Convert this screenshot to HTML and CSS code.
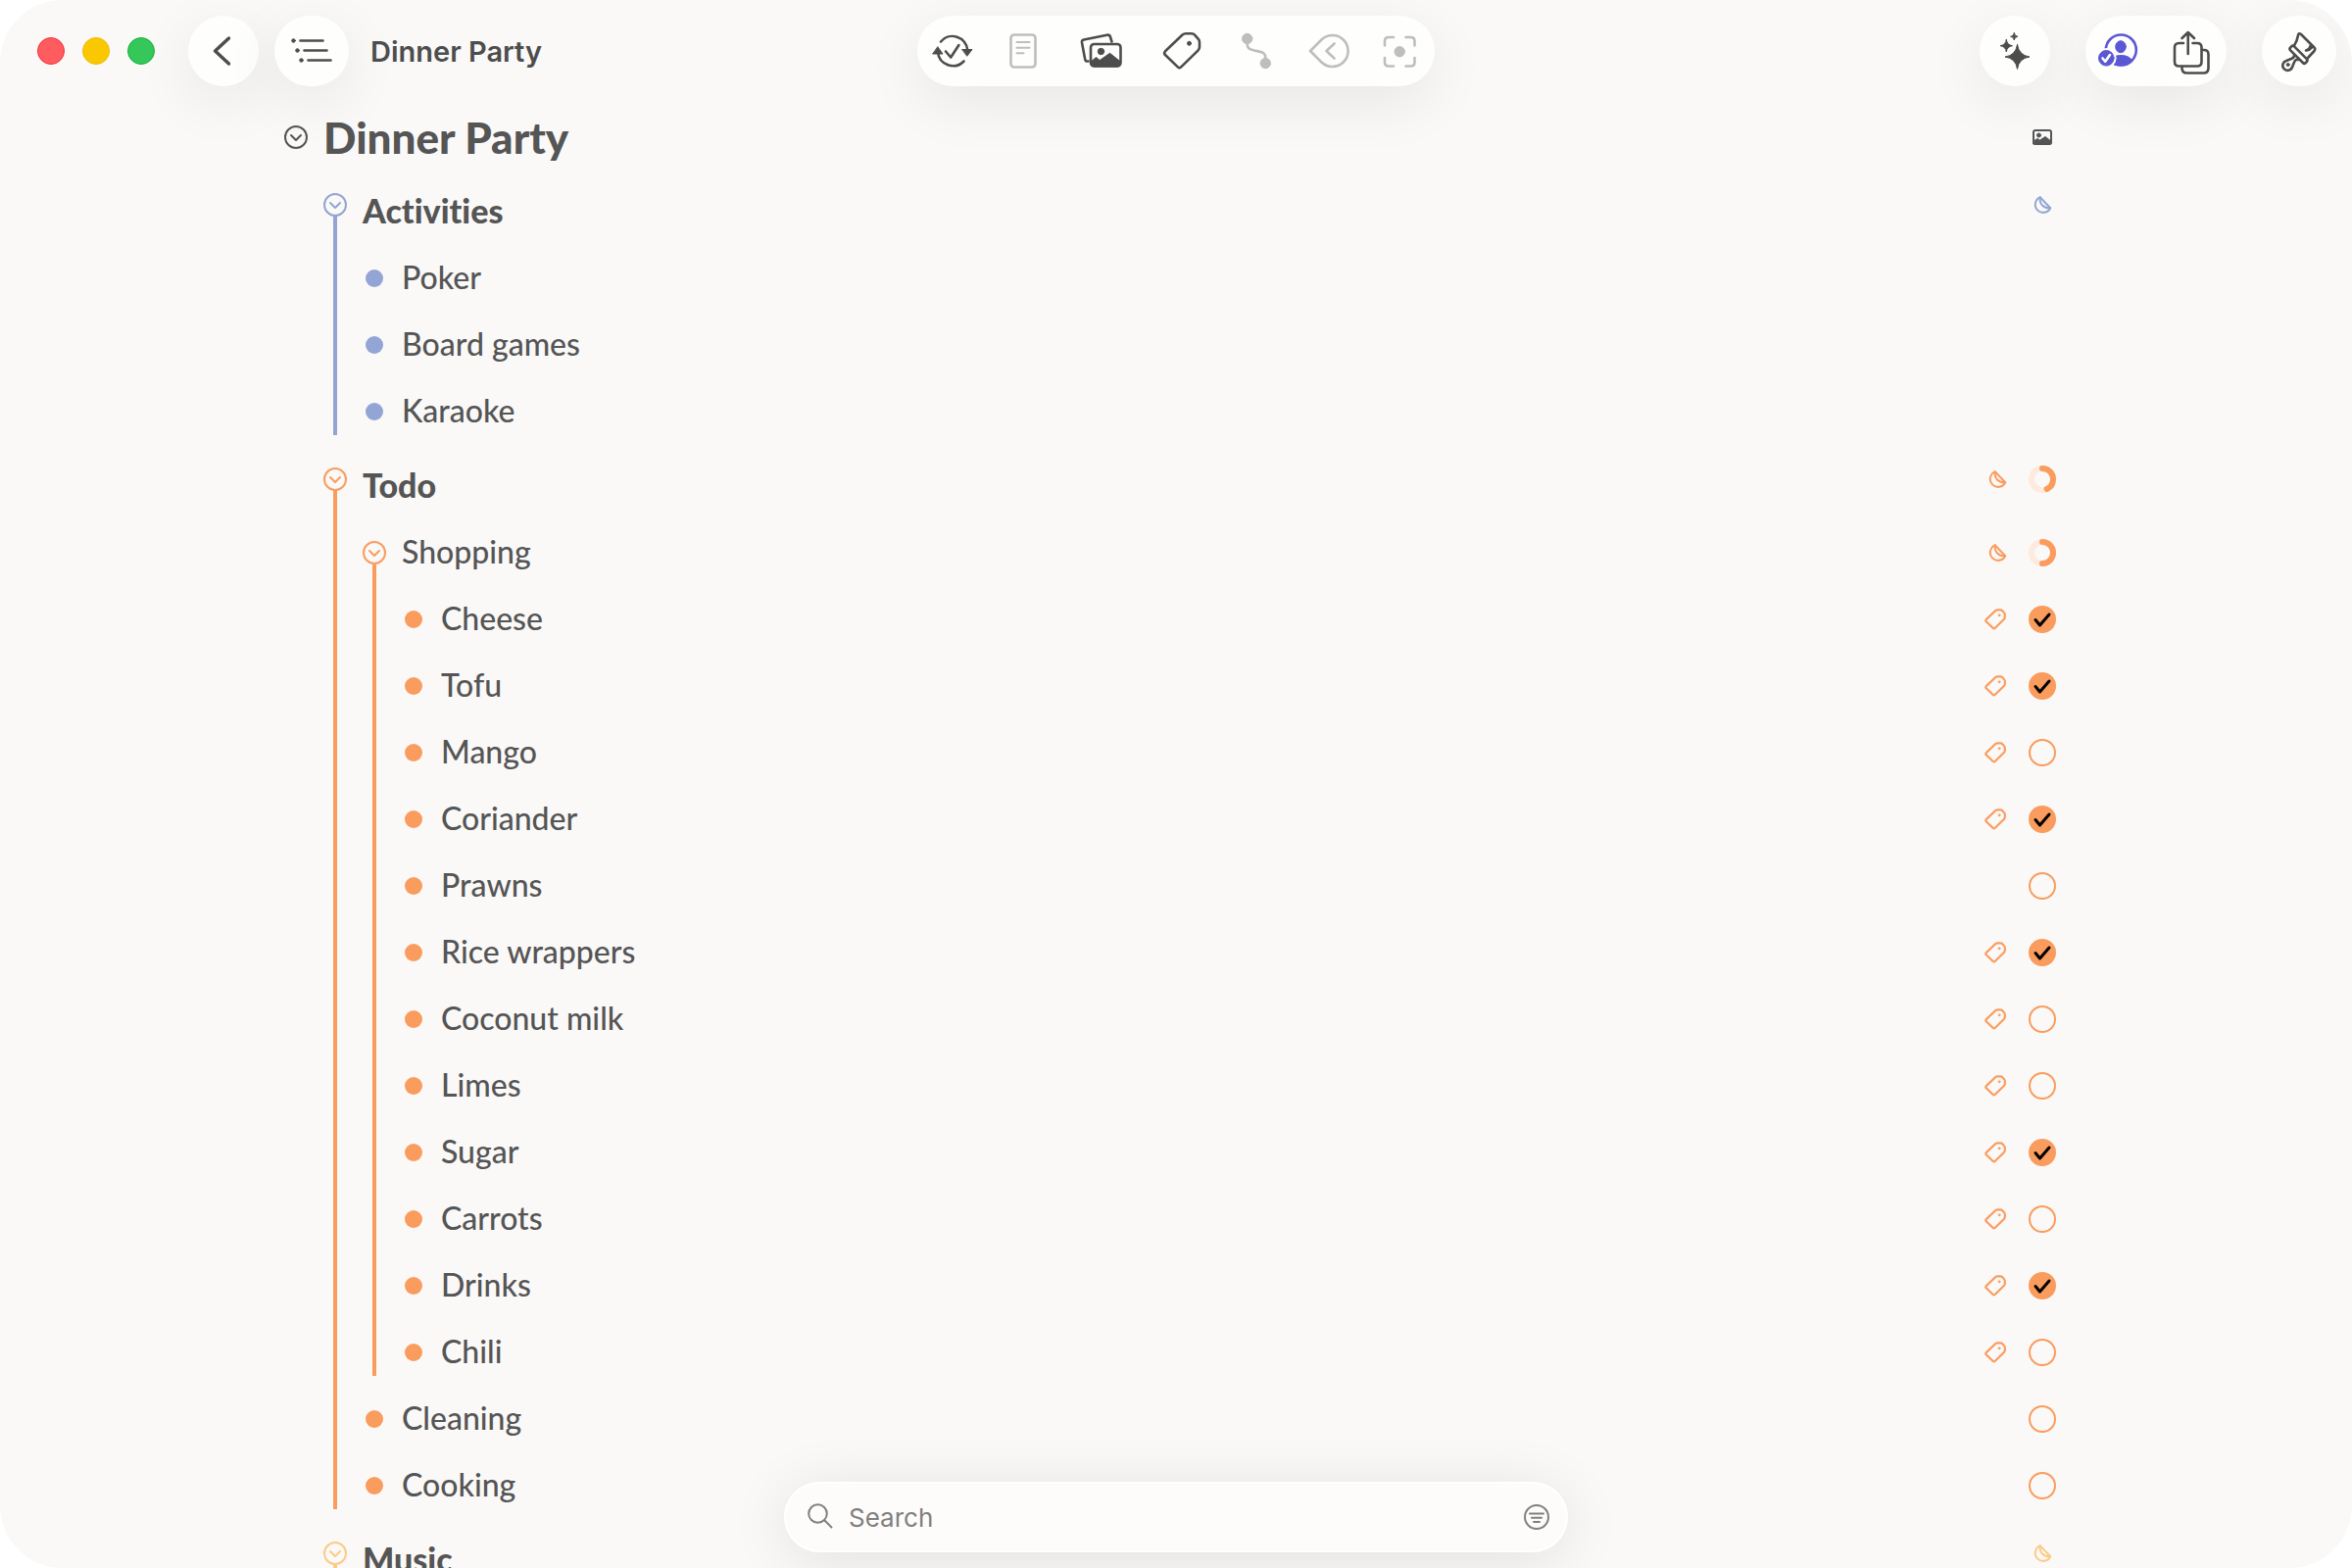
FILE: index.html
```html
<!DOCTYPE html>
<html lang="en">

<head>
  <meta charset="UTF-8" />
  <meta name="viewport" content="width=device-width, initial-scale=1.0" />
  <title>Dinner Party</title>

  <link rel="stylesheet" href="styles.css">
</head>

<body>
  <!-- Shared icons -->
  <svg class="sprite" aria-hidden="true">
    <symbol id="chevron" viewBox="0 0 24 24">
      <circle cx="12" cy="12" r="11" />
      <path d="M7 10l5 5 5-5" />
    </symbol>
    <symbol id="tag" viewBox="0 0 44 44">
      <path d="M5 22.3L22.6 5.5Q24 4.3 26 4.3h6Q34 4.3 35.3 5.8l3.5 4.1Q40 11.3 40 13v5Q40 20 38.6 21.4L21.2 38.4Q19.5 40 17.8 38.4L5 26Q3.2 24.2 5 22.3z" />
      <circle class="dot" cx="29.5" cy="14.3" r="2" />
    </symbol>
    <symbol id="sticker" viewBox="0 0 20 20">
      <path d="M7.7 2.3A8.1 8.1 0 1 0 18.2 13.2z" />
      <path d="M7.7 2.3C7 9 11 13.8 18.2 13.2" />
    </symbol>
    <symbol id="check" viewBox="0 0 28 28">
      <path d="M7 14.5l4.5 5.5L21 9" />
    </symbol>
  </svg>

  <div class="window">
    <header class="toolbar">
      <div class="toolbar-left">
        <div class="lights">
          <button class="light close" aria-label="Close"></button>
          <button class="light minimize" aria-label="Minimize"></button>
          <button class="light zoom" aria-label="Zoom"></button>
        </div>
        <div class="nav">
          <div class="pill">
            <button class="tool" aria-label="Back">
              <svg class="icon bold" viewBox="0 0 44 44"><path d="M27.500 9L13.500 22l14 13" /></svg>
            </button>
          </div>
          <div class="pill">
            <button class="tool medium" aria-label="Outline view">
              <svg class="icon" viewBox="0 0 44 44">
                <path d="M10.500 11.500h23M14.500 21.500h23M18.500 31.500h23" />
                <g class="dot"><circle cx="3.500" cy="11.500" r="1.800" /><circle cx="7.500" cy="21.500" r="1.800" /><circle cx="11.500" cy="31.500" r="1.800" /></g>
              </svg>
            </button>
          </div>
        </div>
        <span class="doc-title">Dinner Party</span>
      </div>

      <div class="pill">
        <button class="tool" aria-label="Task">
          <svg class="icon" viewBox="0 0 44 44">
            <path d="M10 12.500A15.500 15.500 0 0 1 37.300 21" />
            <path d="M7 23A15.500 15.500 0 0 0 33.500 32.500" />
            <path d="M15 22.500l5.200 6L28.400 16" />
            <path class="dot" d="M32 20.500h10L37 27zM2 25h10L7 18z" />
          </svg>
        </button>
        <button class="tool" aria-label="Note" disabled>
          <svg class="icon" viewBox="0 0 44 44">
            <rect x="9.500" y="5.500" width="25" height="33" rx="3.500" />
            <path class="thin" d="M15.500 13h13M15.500 18.700h13M15.500 24.300h7" />
          </svg>
        </button>
        <button class="tool wide" aria-label="Images">
          <svg class="icon" viewBox="0 0 44 44">
            <path d="M8.500 32.500H7.500Q5.500 32.500 5.200 30.500L2 13.500Q1.600 11 4 10.500L27.500 5.700Q30.200 5.200 30.900 7.500L32.500 12.500" />
            <rect x="11" y="15" width="30.500" height="22.500" rx="3.500" />
            <circle class="dot" cx="21.500" cy="22.500" r="3.200" />
            <path class="dot" d="M11 33l5.500-4.500 3.700 3L30.500 24.300 41.500 33v3L39 38H14l-3-2z" />
          </svg>
        </button>
        <button class="tool medium" aria-label="Tags">
          <svg class="icon"><use href="#tag" /></svg>
        </button>
        <button class="tool medium" aria-label="Connection" disabled>
          <svg class="icon" viewBox="0 0 44 44">
            <path d="M12.700 12v3c0 4 2 5 6.300 6.200 9 2.300 12.300 2 12.300 7.800v3" />
            <circle class="dot" cx="12.700" cy="9.500" r="5.200" />
            <circle class="dot" cx="31.300" cy="34.500" r="5.200" />
          </svg>
        </button>
        <button class="tool" aria-label="Detach" disabled>
          <svg class="icon" viewBox="0 0 44 44">
            <path d="M3 22L14.500 10.500A16 16 0 1 1 14.500 33.500z" />
            <path d="M27.500 14.500L19.500 22l8 7.500" />
          </svg>
        </button>
        <button class="tool" aria-label="Focus" disabled>
          <svg class="icon" viewBox="0 0 44 44">
            <path d="M7 16.500V12Q7 8 11 8h5M28.500 8h5Q37.500 8 37.500 12v4.500M37.500 29v4.500Q37.500 37.500 33.500 37.500h-5M16 37.500h-5Q7 37.500 7 33.500V29" />
            <circle class="dot" cx="22.200" cy="22.700" r="5.200" />
          </svg>
        </button>
      </div>

      <div class="toolbar-right">
        <div class="pill">
          <button class="tool" aria-label="Assistant">
            <svg class="icon" viewBox="0 0 44 44">
              <path class="solid" d="M24.500 15.500Q26 26.500 37 28 26 29.500 24.500 40.500 23 29.500 12 28 23 26.500 24.500 15.500z" />
              <path class="solid" d="M13.300 10.500Q14 16 19.500 16.700 14 17.400 13.300 23 12.600 17.400 7.100 16.700 12.600 16 13.300 10.500z" />
              <path class="solid" d="M21.300 3.700Q21.600 7 25 7.300 21.600 7.600 21.300 11 21 7.600 17.600 7.300 21 7 21.300 3.700z" />
            </svg>
          </button>
        </div>
        <div class="pill">
          <button class="tool" aria-label="Collaboration">
            <svg class="icon people" viewBox="0 0 44 44">
              <circle cx="22.300" cy="21" r="15.500" />
              <ellipse class="dot" cx="22" cy="17.700" rx="5.300" ry="6" />
              <path class="dot" d="M11 33q2-6.500 11-6.500T33.500 32Q29 37 22.300 37 15 37 11 33z" />
              <circle class="gap" cx="7.300" cy="29.300" r="10.300" />
              <circle class="dot" cx="7.300" cy="29.300" r="7.800" />
              <path class="mark" d="M3.500 29.500l2.700 3.300L11 26" />
            </svg>
          </button>
          <button class="tool" aria-label="Share">
            <svg class="icon" viewBox="0 0 44 44">
              <path d="M14 14H9.500Q5 14 5 18.500V33q0 4.500 4.500 4.500H28q4.500 0 4.500-4.500V18.500Q32.500 14 28 14h-4.500" />
              <path d="M18.700 25V3.500M12.500 9l6.200-6L25 9" />
              <path d="M12.500 38v1.500q0 5 5 5H34.500q5 0 5-5V25.500q0-4.500-4.500-4.500h-2" />
            </svg>
          </button>
        </div>
        <div class="pill">
          <button class="tool medium" aria-label="Style">
            <svg class="icon" viewBox="0 0 44 44">
              <rect x="10.500" y="23" width="22" height="5.500" rx="2" transform="rotate(45 21.500 25.700)" />
              <path d="M17 16.500Q20 12 21 6 21.500 3 24 5L37.500 18.500Q39 20 37.500 22L31 29" />
              <path d="M34 16q-1 4-5 5.500 3 .5 6-3" />
              <path d="M17 26.500q0 2.500-3 3.500l-5 2A5 5 0 1 0 15 38.500l2-5q1.500-3.500 4-2.500" />
              <circle class="dot" cx="10.700" cy="36" r="1.500" />
            </svg>
          </button>
        </div>
      </div>
    </header>

    <main class="outline">
      <div class="row root">
        <button class="toggle" aria-label="Collapse"><svg><use href="#chevron" /></svg></button>
        <h1>Dinner Party</h1>
        <div class="meta">
          <span class="slot">
            <svg class="image" viewBox="0 0 20 16">
              <rect x="1" y="1" width="18" height="14" rx="2" />
              <circle class="dot" cx="6.500" cy="6" r="2" />
              <path class="dot" d="M1 12l4-2.500 2.500 1.500L13 7.500l6 4.500v3H1z" />
            </svg>
          </span>
        </div>
      </div>

      <ul class="list">
        <li class="branch section blue">
          <div class="row">
            <button class="toggle" aria-label="Collapse"><svg><use href="#chevron" /></svg></button>
            <h2>Activities</h2>
            <div class="meta"><span class="slot"><svg class="sticker"><use href="#sticker" /></svg></span></div>
          </div>
          <ul class="list">
            <li class="row"><span class="bullet"></span><span class="text">Poker</span></li>
            <li class="row"><span class="bullet"></span><span class="text">Board games</span></li>
            <li class="row"><span class="bullet"></span><span class="text">Karaoke</span></li>
          </ul>
        </li>

        <li class="branch section orange">
          <div class="row">
            <button class="toggle" aria-label="Collapse"><svg><use href="#chevron" /></svg></button>
            <h2>Todo</h2>
            <div class="meta">
              <svg class="sticker"><use href="#sticker" /></svg>
              <svg class="ring" viewBox="0 0 28 28" role="img" aria-label="43% done"><circle cx="14" cy="14" r="11" /><circle class="value" cx="14" cy="14" r="11" pathLength="100" stroke-dasharray="43 100" /></svg>
            </div>
          </div>
          <ul class="list">
            <li class="branch">
              <div class="row">
                <button class="toggle" aria-label="Collapse"><svg><use href="#chevron" /></svg></button>
                <span class="text">Shopping</span>
                <div class="meta">
                  <svg class="sticker"><use href="#sticker" /></svg>
                  <svg class="ring" viewBox="0 0 28 28" role="img" aria-label="50% done"><circle cx="14" cy="14" r="11" /><circle class="value" cx="14" cy="14" r="11" pathLength="100" stroke-dasharray="50 100" /></svg>
                </div>
              </div>
              <ul class="list">
                <li class="row">
                  <span class="bullet"></span><label class="text" for="cheese">Cheese</label>
                  <div class="meta"><svg class="tag"><use href="#tag" /></svg><span class="task"><input type="checkbox" id="cheese" checked /><svg><use href="#check" /></svg></span></div>
                </li>
                <li class="row">
                  <span class="bullet"></span><label class="text" for="tofu">Tofu</label>
                  <div class="meta"><svg class="tag"><use href="#tag" /></svg><span class="task"><input type="checkbox" id="tofu" checked /><svg><use href="#check" /></svg></span></div>
                </li>
                <li class="row">
                  <span class="bullet"></span><label class="text" for="mango">Mango</label>
                  <div class="meta"><svg class="tag"><use href="#tag" /></svg><span class="task"><input type="checkbox" id="mango" /><svg><use href="#check" /></svg></span></div>
                </li>
                <li class="row">
                  <span class="bullet"></span><label class="text" for="coriander">Coriander</label>
                  <div class="meta"><svg class="tag"><use href="#tag" /></svg><span class="task"><input type="checkbox" id="coriander" checked /><svg><use href="#check" /></svg></span></div>
                </li>
                <li class="row">
                  <span class="bullet"></span><label class="text" for="prawns">Prawns</label>
                  <div class="meta"><span class="task"><input type="checkbox" id="prawns" /><svg><use href="#check" /></svg></span></div>
                </li>
                <li class="row">
                  <span class="bullet"></span><label class="text" for="wrappers">Rice wrappers</label>
                  <div class="meta"><svg class="tag"><use href="#tag" /></svg><span class="task"><input type="checkbox" id="wrappers" checked /><svg><use href="#check" /></svg></span></div>
                </li>
                <li class="row">
                  <span class="bullet"></span><label class="text" for="coconut">Coconut milk</label>
                  <div class="meta"><svg class="tag"><use href="#tag" /></svg><span class="task"><input type="checkbox" id="coconut" /><svg><use href="#check" /></svg></span></div>
                </li>
                <li class="row">
                  <span class="bullet"></span><label class="text" for="limes">Limes</label>
                  <div class="meta"><svg class="tag"><use href="#tag" /></svg><span class="task"><input type="checkbox" id="limes" /><svg><use href="#check" /></svg></span></div>
                </li>
                <li class="row">
                  <span class="bullet"></span><label class="text" for="sugar">Sugar</label>
                  <div class="meta"><svg class="tag"><use href="#tag" /></svg><span class="task"><input type="checkbox" id="sugar" checked /><svg><use href="#check" /></svg></span></div>
                </li>
                <li class="row">
                  <span class="bullet"></span><label class="text" for="carrots">Carrots</label>
                  <div class="meta"><svg class="tag"><use href="#tag" /></svg><span class="task"><input type="checkbox" id="carrots" /><svg><use href="#check" /></svg></span></div>
                </li>
                <li class="row">
                  <span class="bullet"></span><label class="text" for="drinks">Drinks</label>
                  <div class="meta"><svg class="tag"><use href="#tag" /></svg><span class="task"><input type="checkbox" id="drinks" checked /><svg><use href="#check" /></svg></span></div>
                </li>
                <li class="row">
                  <span class="bullet"></span><label class="text" for="chili">Chili</label>
                  <div class="meta"><svg class="tag"><use href="#tag" /></svg><span class="task"><input type="checkbox" id="chili" /><svg><use href="#check" /></svg></span></div>
                </li>
              </ul>
            </li>
            <li class="row">
              <span class="bullet"></span><label class="text" for="cleaning">Cleaning</label>
              <div class="meta"><span class="task"><input type="checkbox" id="cleaning" /><svg><use href="#check" /></svg></span></div>
            </li>
            <li class="row">
              <span class="bullet"></span><label class="text" for="cooking">Cooking</label>
              <div class="meta"><span class="task"><input type="checkbox" id="cooking" /><svg><use href="#check" /></svg></span></div>
            </li>
          </ul>
        </li>

        <li class="branch section yellow">
          <div class="row">
            <button class="toggle" aria-label="Collapse"><svg><use href="#chevron" /></svg></button>
            <h2>Music</h2>
            <div class="meta"><span class="slot"><svg class="sticker"><use href="#sticker" /></svg></span></div>
          </div>
        </li>
      </ul>
    </main>

    <!-- Floating search field -->
    <div class="search">
      <svg class="search-icon" viewBox="0 0 26 26"><circle cx="10.500" cy="9.500" r="9.300" /><path d="M17.500 16.500l7 7" /></svg>
      <input type="search" placeholder="Search" aria-label="Search" />
      <button class="filter" aria-label="Filter">
        <svg viewBox="0 0 26 26"><circle cx="13" cy="13" r="12" /><path d="M6 9.500h14M8 13.700h10M10 17.900h6" /></svg>
      </button>
    </div>
  </div>
</body>

</html>
```
FILE: styles.css
```css
* {
  box-sizing: border-box;
}

body {
  margin: 0;
  background: #fff;
  color: #555;
  font-family: Lato, "Open Sans", sans-serif;
  font-variant-ligatures: none;
}

button {
  padding: 0;
  border: none;
  background: none;
  color: inherit;
}

svg {
  display: block;
  overflow: visible;
  fill: none;
  stroke: currentColor;
  stroke-width: 2;
  stroke-linecap: round;
  stroke-linejoin: round;
}

.sprite {
  position: absolute;
  width: 0;
  height: 0;
}

.dot {
  fill: currentColor;
  stroke-width: 1;
}

.solid {
  fill: currentColor;
  stroke-width: 1;
}

/* Window frame, clips the outline at the bottom */
.window {
  position: relative;
  height: 100vh;
  overflow: hidden;
  border-radius: 64px;
  background: #faf9f8;
}

/* Toolbar */
.toolbar {
  display: grid;
  grid-template-columns: 1fr auto 1fr;
  padding: 16px;
  color: #4d4d4d;
}

.toolbar-left {
  display: flex;
  align-items: center;
  padding-left: 22px;
}

.toolbar-right {
  display: flex;
  justify-content: flex-end;
  gap: 36px;
}

.lights {
  display: flex;
  gap: 18px;
  margin-right: 34px;
}

.light {
  width: 28px;
  height: 28px;
  border-radius: 50%;
}

.close {
  background: #ff5c60;
  border: 1px solid #fb2c36;
}

.minimize {
  background: #fac800;
  border: 1px solid #f0b900;
}

.zoom {
  background: #35c759;
  border: 1px solid #12b53a;
}

.nav {
  display: flex;
  gap: 16px;
  margin-right: 22px;
}

.doc-title {
  font: 600 29px Inter, sans-serif;
}

.pill {
  display: flex;
  height: 72px;
  border-radius: 36px;
  background: #fefefd;
  box-shadow: 0 16px 60px rgba(0, 0, 0, 0.08);
}

.tool {
  display: flex;
  align-items: center;
  justify-content: center;
  width: 72px;
}

.tool.wide {
  width: 88px;
}

.tool.medium {
  width: 76px;
}

.tool:disabled {
  color: #bfbebd;
}

.icon {
  width: 44px;
  height: 44px;
  stroke-width: 2.6;
}

.icon.bold {
  stroke-width: 3.4;
}

.thin {
  stroke-width: 2;
}

.people {
  color: #5b58d6;
}

.people .gap {
  fill: #fefefd;
  stroke: none;
}

.people .mark {
  stroke: #fff;
}

/* Outline */
.outline {
  max-width: 1820px;
  margin: 0 auto;
  padding-right: 12px;
}

.list {
  margin: 0;
  padding: 0 0 0 40px;
  list-style: none;
}

.row {
  display: flex;
  align-items: center;
  gap: 16px;
  height: 68px;
  font-size: 32px;
  font-weight: 500;
  line-height: 40px;
}

.text {
  padding-bottom: 2px;
}

.row.root {
  height: 70px;
  padding-top: 2px;
}

h1,
h2 {
  margin: 0;
  font-weight: 900;
}

h1 {
  font-size: 44px;
}

h2 {
  padding-top: 12px;
  font-size: 34px;
}

.section > .row {
  height: 76px;
  padding-bottom: 7px;
}

.branch {
  position: relative;
}

/* Line running down from the toggle past the children */
.branch::before {
  content: "";
  position: absolute;
  top: 46px;
  bottom: 10px;
  left: 10px;
  width: 4px;
  background: var(--branch);
}

.blue {
  --branch: #92a5d4;
}

.orange {
  --branch: #fa9c5e;
}

.yellow {
  --branch: #fccb85;
}

.toggle,
.toggle svg {
  width: 24px;
  height: 24px;
}

.branch .toggle,
.meta {
  color: var(--branch);
}

.root .meta {
  color: #555;
}

.bullet {
  width: 18px;
  height: 18px;
  margin: 0 3px;
  border-radius: 50%;
  background: var(--branch);
}

.meta {
  display: flex;
  align-items: center;
  gap: 22px;
  margin-left: auto;
}

.slot {
  display: flex;
  justify-content: center;
  width: 28px;
}

.image {
  width: 20px;
  height: 16px;
}

.sticker {
  width: 20px;
  height: 20px;
}

.tag {
  width: 24px;
  height: 24px;
  stroke-width: 4;
}

.ring {
  width: 28px;
  height: 28px;
  transform: rotate(-90deg);
  stroke: #feeade;
  stroke-width: 6;
}

.ring .value {
  stroke: var(--branch);
}

/* Checkbox with the tick laid over it */
.task {
  display: grid;
  width: 28px;
  height: 28px;
}

.task input,
.task svg {
  grid-area: 1 / 1;
  width: 28px;
  height: 28px;
  margin: 0;
}

.task input {
  appearance: none;
  border: 2px solid var(--branch);
  border-radius: 50%;
}

.task input:checked {
  background: var(--branch);
}

.task svg {
  visibility: hidden;
  color: #000;
  stroke-width: 3;
  pointer-events: none;
}

.task input:checked + svg {
  visibility: visible;
}

/* Search */
.search {
  position: absolute;
  bottom: 16px;
  left: 33.333%;
  right: 33.333%;
  display: flex;
  align-items: center;
  gap: 16px;
  height: 72px;
  padding: 0 17px 0 22px;
  border: 2px solid #fff;
  border-radius: 36px;
  background: #fdfcfa;
  box-shadow: 0 8px 60px rgba(0, 0, 0, 0.1);
  color: #808080;
}

.search-icon,
.filter svg {
  width: 26px;
  height: 26px;
}

.search input {
  flex: 1;
  min-width: 0;
  padding: 0;
  border: none;
  outline: none;
  background: none;
  color: #555;
  font: 400 26px Inter, sans-serif;
}

.search input::placeholder {
  color: #808080;
}
```
